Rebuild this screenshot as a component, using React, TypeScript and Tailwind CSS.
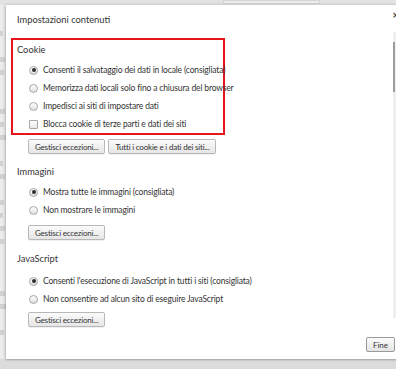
import React from "react";

const font = { fontFamily: 'Lato, "Open Sans", sans-serif' };

function Radio({ checked }: { checked?: boolean }) {
  return (
    <span className="flex h-[9px] w-[9px] shrink-0 items-center justify-center rounded-full border border-[#a6a6a6] bg-gradient-to-b from-[#ffffff] to-[#dedede]">
      {checked && <span className="h-[4px] w-[4px] rounded-full bg-[#2e2e2e]" />}
    </span>
  );
}

function Check() {
  return (
    <span className="h-[9px] w-[9px] shrink-0 rounded-[1px] border border-[#a6a6a6] bg-gradient-to-b from-[#ffffff] to-[#e6e6e6]" />
  );
}

function Option({ label, checked, box }: { label: string; checked?: boolean; box?: boolean }) {
  return (
    <div className="flex h-[18px] items-center gap-[5px] pl-[12px]">
      {box ? <Check /> : <Radio checked={checked} />}
      <span className="whitespace-nowrap text-[8.5px] leading-none tracking-[-0.15px] text-[#333]">{label}</span>
    </div>
  );
}

function Btn({ label }: { label: string }) {
  return (
    <div className="flex h-[15px] items-center whitespace-nowrap rounded-[2px] border border-[#b8b8b8] bg-gradient-to-b from-[#fbfbfb] to-[#e6e6e6] px-[6px] text-[8px] leading-none tracking-[-0.2px] text-[#333] shadow-[0_1px_0_rgba(0,0,0,0.06)]">
      {label}
    </div>
  );
}

function Heading({ label }: { label: string }) {
  return <div className="flex h-[14px] items-center text-[9.3px] leading-none text-[#333]">{label}</div>;
}

export default function App() {
  const frag = [3, 0, 5, 4, 0, 0, 5, 4, 6, 0, 3, 5, 0, 4, 3, 5, 4, 0, 0, 0, 5, 6, 0, 4];
  return (
    <div className="relative h-[369px] w-[396px] overflow-hidden bg-[#ececec]" style={font}>
      {/* background page */}
      <div className="absolute left-0 top-0 h-[5px] w-full bg-[#e2e2e2]">
        <div className="ml-[223px] h-[4px] w-[97px] border border-[#d4d4d4] bg-[#ededed]" />
      </div>
      <div className="absolute left-0 top-[5px] flex w-[6px] flex-col gap-[1px] overflow-hidden pt-[22px]">
        {frag.map((w, i) => (
          <div key={i} className="flex h-[12px] items-center">
            <div className="h-[5px] bg-[#d2d2d2]" style={{ width: w }} />
          </div>
        ))}
      </div>
      <div className="absolute bottom-0 left-0 h-[10px] w-full bg-[#dcdcdc]" />

      {/* dialog */}
      <div className="absolute left-[6px] top-[5px] flex h-[354px] w-[392px] flex-col bg-white pl-[5px] shadow-[-1px_0_3px_rgba(0,0,0,0.18),0_1px_2px_rgba(0,0,0,0.2)]">
        <div className="flex h-[28px] items-center pl-[6px] pt-[2px] text-[9.3px] text-[#333]">Impostazioni contenuti</div>
        <div className="absolute right-[-1px] top-[4px] text-[11px] font-bold leading-none text-[#444]">×</div>
        {/* scrollbar */}
        <div className="absolute right-[2px] top-[27px] h-[286px] w-[3px] bg-[#efefef]">
          <div className="mt-[10px] h-[50px] w-[2px] bg-[#9c9c9c]" />
        </div>

        <div className="mt-[5px] h-[97px] w-[214px] border-2 border-[#e8141b] pl-[4px] pt-[3px]">
          <Heading label="Cookie" />
          <div className="mt-[4px]">
            <Option label="Consenti il salvataggio dei dati in locale (consigliata)" checked />
            <Option label="Memorizza dati locali solo fino a chiusura del browser" />
            <Option label="Impedisci ai siti di impostare dati" />
            <Option label="Blocca cookie di terze parti e dati dei siti" box />
          </div>
        </div>
        <div className="mt-[4px] flex gap-[3px] pl-[17px]">
          <Btn label="Gestisci eccezioni..." />
          <Btn label="Tutti i cookie e i dati dei siti..." />
        </div>

        <div className="pl-[6px]">
          <div className="mt-[11px]">
            <Heading label="Immagini" />
          </div>
          <div className="mt-[4px]">
            <Option label="Mostra tutte le immagini (consigliata)" checked />
            <Option label="Non mostrare le immagini" />
          </div>
          <div className="mt-[6px] flex pl-[11px]">
            <Btn label="Gestisci eccezioni..." />
          </div>

          <div className="mt-[12px]">
            <Heading label="JavaScript" />
          </div>
          <div className="mt-[6px]">
            <Option label="Consenti l'esecuzione di JavaScript in tutti i siti (consigliata)" checked />
            <Option label="Non consentire ad alcun sito di eseguire JavaScript" />
          </div>
          <div className="mt-[4px] flex pl-[11px]">
            <Btn label="Gestisci eccezioni..." />
          </div>
        </div>

        <div className="mt-[10px] flex justify-end pr-[3px]">
          <div className="flex h-[15px] w-[29px] items-center justify-center rounded-[2px] border border-[#9a9a9a] bg-gradient-to-b from-[#fbfbfb] to-[#e4e4e4] text-[8px] leading-none text-[#333]">
            Fine
          </div>
        </div>
      </div>
    </div>
  );
}
